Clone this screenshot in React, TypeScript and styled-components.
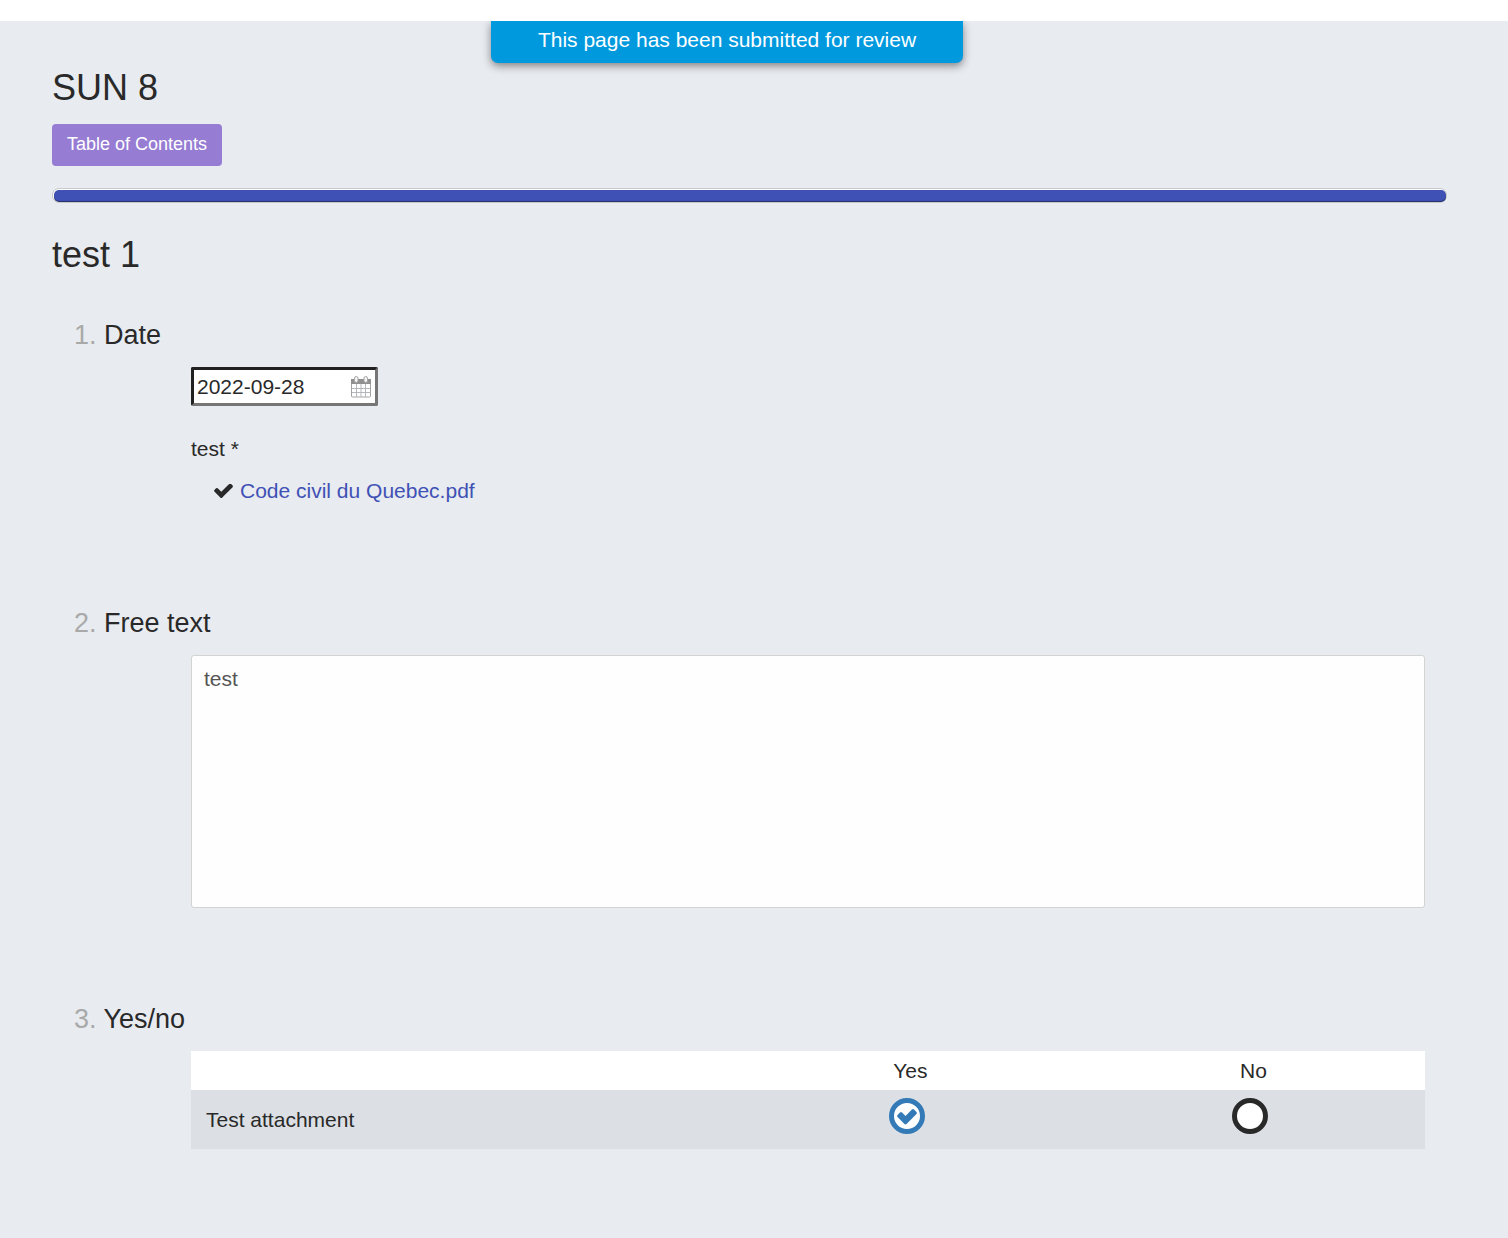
import React, { useState } from "react";
import styled, { createGlobalStyle } from "styled-components";

const GlobalStyle = createGlobalStyle`
  *, *::before, *::after { box-sizing: border-box; }
  body {
    margin: 0;
    background: #e8ebf0;
    color: #292929;
    font: 21px/30px "Liberation Sans", Arial, sans-serif;
  }
  input, textarea, button { font: inherit; color: inherit; }
`;

const TopStrip = styled.div`
  position: relative;
  z-index: 1;
  height: 21px;
  background: #fff;
`;

const BannerRow = styled.div`
  display: flex;
  justify-content: center;
  padding-right: 54px;
`;

const Banner = styled.div`
  padding: 4px 47px 8px;
  border-radius: 0 0 7px 7px;
  background: #0099de;
  color: #fff;
  box-shadow: 0 3px 8px rgba(0, 0, 0, 0.45);
`;

const Page = styled.main`
  padding: 5px 61px 88px 52px;
`;

const Title = styled.h1`
  margin: 0;
  font-size: 36px;
  font-weight: 400;
  line-height: 40px;
`;

const ContentsButton = styled.button`
  display: block;
  margin: 16px 0 22px;
  padding: 0 15px 2px;
  height: 42px;
  border: 0;
  border-radius: 4px;
  background: #967cd3;
  color: #fff;
  font-size: 18px;
  cursor: pointer;
`;

const ProgressTrack = styled.div`
  height: 15px;
  margin-bottom: 32px;
  padding: 1px 0 0 1px;
  border: 1px solid #c8c8c8;
  border-radius: 7px;
  background: #fff;
`;

const ProgressFill = styled.div`
  height: 100%;
  border-radius: 5px;
  background: #3f51b5;
  box-shadow: inset 0 -1px 1px rgba(0, 0, 0, 0.4);
`;

const Questions = styled.ol`
  margin: 44px 0 0;
  padding: 0 22px;
  list-style: none;
`;

const Question = styled.li`
  margin-bottom: 95px;
  &:last-child { margin-bottom: 0; }
`;

const QuestionTitle = styled.h2`
  margin: 0 0 16px;
  font-size: 27px;
  font-weight: 400;
  line-height: 32px;
`;

const Number = styled.span`
  color: #a9a9a9;
`;

const Answer = styled.div`
  padding-left: 117px;
`;

const DateField = styled.div`
  display: flex;
  align-items: center;
  width: 187px;
  height: 39px;
  margin-bottom: 28px;
  padding: 0 4px 0 3px;
  border: 3px solid;
  border-color: #212121 #767676 #767676 #212121;
  border-radius: 2px;
  background: #fff;
`;

const DateInput = styled.input`
  flex: 1;
  min-width: 0;
  padding: 0;
  border: 0;
  outline: 0;
  background: transparent;
`;

const IconButton = styled.button`
  display: flex;
  padding: 0;
  border: 0;
  background: none;
  cursor: pointer;
`;

const FileLabel = styled.p`
  margin: 0 0 12px;
`;

const FileRow = styled.div`
  display: flex;
  align-items: center;
  gap: 7px;
  padding: 0 0 6px 23px;
`;

const FileLink = styled.a`
  color: #3f51b5;
  text-decoration: none;
`;

const TextArea = styled.textarea`
  display: block;
  width: 100%;
  height: 253px;
  padding: 8px 12px;
  border: 1px solid #d3d3d3;
  border-radius: 3px;
  outline: 0;
  background: #fefefe;
  color: #555;
  resize: none;
`;

const Table = styled.table`
  width: 100%;
  border-collapse: collapse;
  table-layout: fixed;
`;

const HeadCell = styled.th<{ $width: string }>`
  width: ${(p) => p.$width};
  height: 39px;
  padding: 0;
  background: #fff;
  font-weight: 400;
`;

const RowHead = styled.th`
  height: 59px;
  padding: 0 15px;
  background: #dce0e5;
  font-weight: 400;
  text-align: left;
`;

const ChoiceCell = styled.td`
  padding: 0 6px 7px 0;
  background: #dce0e5;
`;

const Choice = styled.label`
  display: grid;
  width: 36px;
  height: 36px;
  margin: 0 auto;
  color: #337ab7;
  cursor: pointer;
  > * { grid-area: 1 / 1; }
  svg { pointer-events: none; }
`;

const Radio = styled.input`
  appearance: none;
  width: 36px;
  height: 36px;
  margin: 0;
  border: 5px solid #292929;
  border-radius: 50%;
  background: #fff;
  &:checked { border-color: #337ab7; }
`;

const CheckIcon = () => (
  <svg width="19" height="14" viewBox="121 374 1550 1148" fill="currentColor" aria-hidden="true">
    <path d="M1671 566q0 40-28 68l-724 724-136 136q-28 28-68 28t-68-28l-136-136-362-362q-28-28-28-68t28-68l136-136q28-28 68-28t68 28l294 295 656-657q28-28 68-28t68 28l136 136q28 28 28 68z" />
  </svg>
);

const RadioCheck = () => (
  <svg width="36" height="36" viewBox="128 128 1536 1536" fill="currentColor" aria-hidden="true">
    <path d="M1299 813l-422 422q-19 19-45 19t-45-19l-294-294q-19-19-19-45t19-45l102-102q19-19 45-19t45 19l147 147 275-275q19-19 45-19t45 19l102 102q19 19 19 45t-19 45z" />
  </svg>
);

const CalendarIcon = () => (
  <svg width="20" height="22" viewBox="0 0 20 22" aria-hidden="true">
    <rect x="0.5" y="3.5" width="19" height="17.5" rx="1" fill="#fff" stroke="#a3a3a3" />
    <path d="M0 3h20v5H0z" fill="#909090" />
    <path d="M5.5 8v13M10 8v13M14.5 8v13M1 12.5h18M1 16.5h18" stroke="#b4b7ba" fill="none" />
    <rect x="3.5" y="0.5" width="3.5" height="6" rx="1.7" fill="#f4f4f4" stroke="#a3a3a3" />
    <rect x="13" y="0.5" width="3.5" height="6" rx="1.7" fill="#f4f4f4" stroke="#a3a3a3" />
  </svg>
);

export default function App() {
  const [date, setDate] = useState("2022-09-28");
  const [text, setText] = useState("test");
  const [answer, setAnswer] = useState("Yes");

  return (
    <>
      <GlobalStyle />
      <TopStrip />
      <BannerRow>
        <Banner role="status">This page has been submitted for review</Banner>
      </BannerRow>
      <Page>
        <Title>SUN 8</Title>
        <ContentsButton type="button">Table of Contents</ContentsButton>
        <ProgressTrack role="progressbar" aria-label="Progress" aria-valuenow={100}>
          <ProgressFill />
        </ProgressTrack>
        <Title as="h2">test 1</Title>
        <Questions>
          <Question>
            <QuestionTitle>
              <Number>1.</Number> <label htmlFor="date">Date</label>
            </QuestionTitle>
            <Answer>
              <DateField>
                <DateInput id="date" value={date} onChange={(e) => setDate(e.target.value)} />
                <IconButton type="button" aria-label="Open calendar">
                  <CalendarIcon />
                </IconButton>
              </DateField>
              <FileLabel>test *</FileLabel>
              <FileRow>
                <CheckIcon />
                <FileLink href="#file">Code civil du Quebec.pdf</FileLink>
              </FileRow>
            </Answer>
          </Question>
          <Question>
            <QuestionTitle>
              <Number>2.</Number> <label htmlFor="free-text">Free text</label>
            </QuestionTitle>
            <Answer>
              <TextArea id="free-text" value={text} onChange={(e) => setText(e.target.value)} />
            </Answer>
          </Question>
          <Question>
            <QuestionTitle>
              <Number>3.</Number> Yes/no
            </QuestionTitle>
            <Answer>
              <Table>
                <thead>
                  <tr>
                    <HeadCell $width="44.4%" />
                    <HeadCell $width="27.8%" scope="col">Yes</HeadCell>
                    <HeadCell $width="27.8%" scope="col">No</HeadCell>
                  </tr>
                </thead>
                <tbody>
                  <tr>
                    <RowHead scope="row">Test attachment</RowHead>
                    {["Yes", "No"].map((value) => (
                      <ChoiceCell key={value}>
                        <Choice>
                          <Radio
                            type="radio"
                            name="attachment"
                            aria-label={value}
                            checked={answer === value}
                            onChange={() => setAnswer(value)}
                          />
                          {answer === value && <RadioCheck />}
                        </Choice>
                      </ChoiceCell>
                    ))}
                  </tr>
                </tbody>
              </Table>
            </Answer>
          </Question>
        </Questions>
      </Page>
    </>
  );
}
